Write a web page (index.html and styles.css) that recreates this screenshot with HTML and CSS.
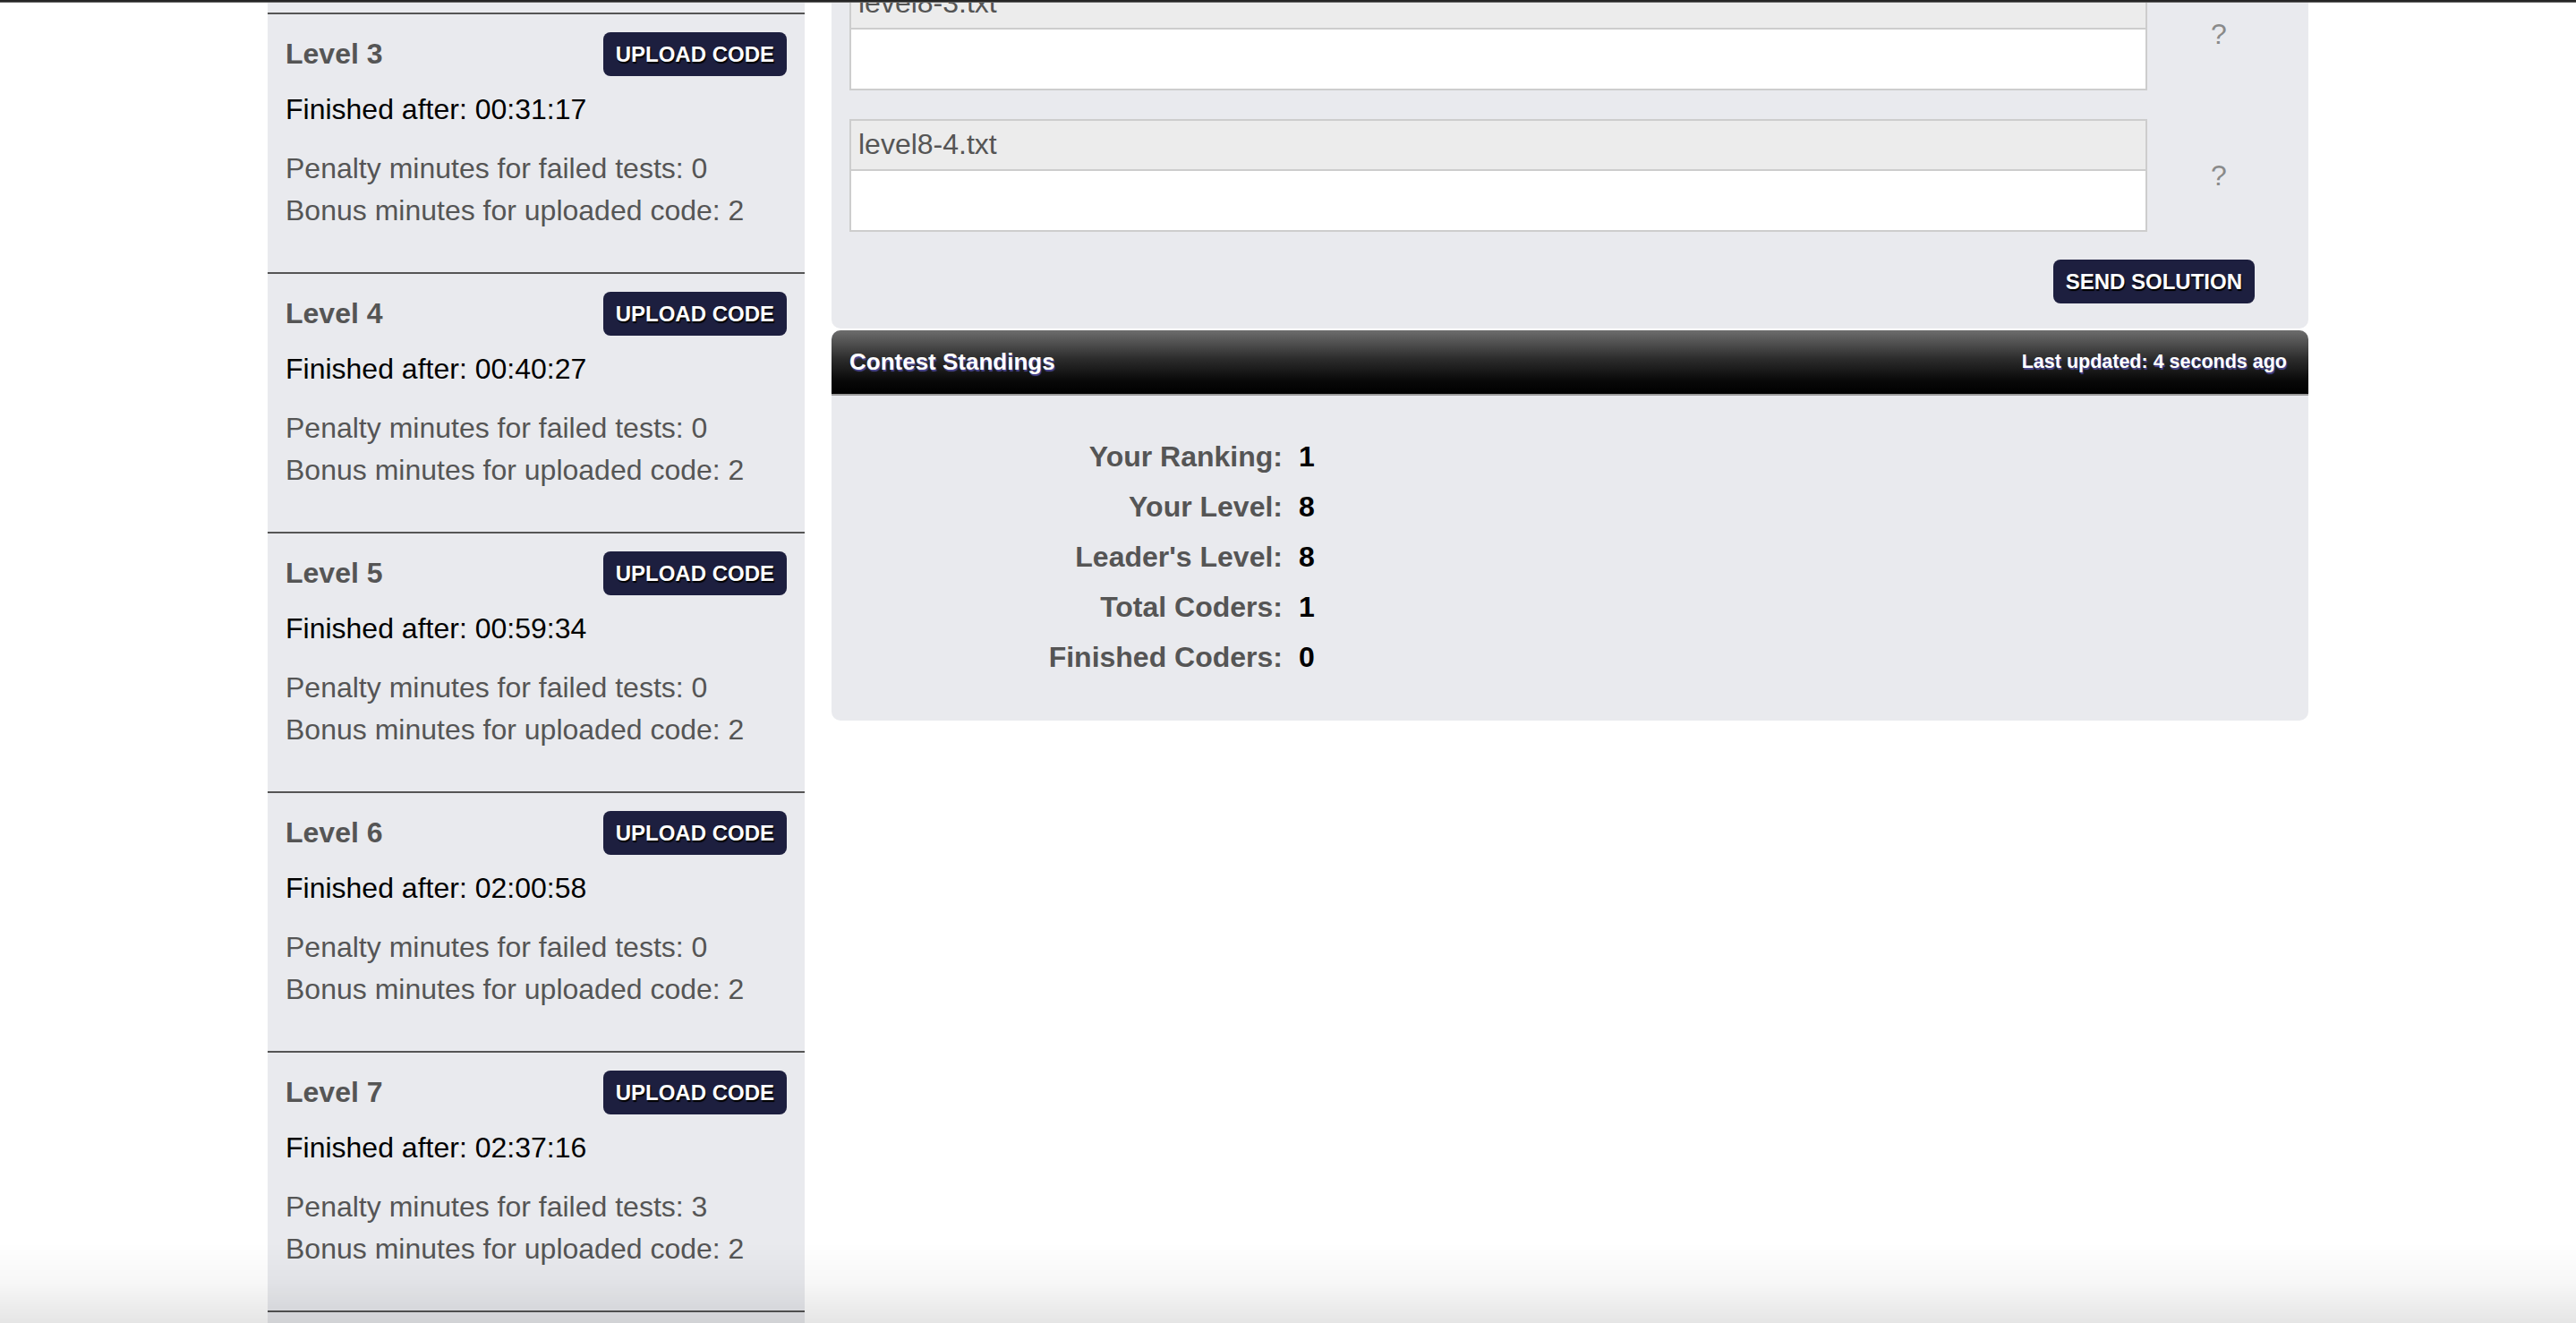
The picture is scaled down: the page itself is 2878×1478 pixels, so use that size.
FILE: index.html
```html
<!DOCTYPE html>
<html lang="en">
<head>
<meta charset="utf-8">
<title>Contest</title>
<link rel="stylesheet" href="styles.css">
</head>
<body>
<div class="topbar"></div>
<div class="page">
  <aside class="levels">
    <section class="level">
      <div class="level-head"><h3>Level 3</h3><button class="btn" type="button">UPLOAD CODE</button></div>
      <p class="finished">Finished after: 00:31:17</p>
      <p class="stat">Penalty minutes for failed tests: 0</p>
      <p class="stat">Bonus minutes for uploaded code: 2</p>
    </section>
    <section class="level">
      <div class="level-head"><h3>Level 4</h3><button class="btn" type="button">UPLOAD CODE</button></div>
      <p class="finished">Finished after: 00:40:27</p>
      <p class="stat">Penalty minutes for failed tests: 0</p>
      <p class="stat">Bonus minutes for uploaded code: 2</p>
    </section>
    <section class="level">
      <div class="level-head"><h3>Level 5</h3><button class="btn" type="button">UPLOAD CODE</button></div>
      <p class="finished">Finished after: 00:59:34</p>
      <p class="stat">Penalty minutes for failed tests: 0</p>
      <p class="stat">Bonus minutes for uploaded code: 2</p>
    </section>
    <section class="level">
      <div class="level-head"><h3>Level 6</h3><button class="btn" type="button">UPLOAD CODE</button></div>
      <p class="finished">Finished after: 02:00:58</p>
      <p class="stat">Penalty minutes for failed tests: 0</p>
      <p class="stat">Bonus minutes for uploaded code: 2</p>
    </section>
    <section class="level">
      <div class="level-head"><h3>Level 7</h3><button class="btn" type="button">UPLOAD CODE</button></div>
      <p class="finished">Finished after: 02:37:16</p>
      <p class="stat">Penalty minutes for failed tests: 3</p>
      <p class="stat">Bonus minutes for uploaded code: 2</p>
    </section>
  </aside>

  <main class="content">
    <form class="solution">
      <div class="file-row first">
        <div class="file-box">
          <div class="file-name">level8-3.txt</div>
          <textarea class="file-input"></textarea>
        </div>
        <span class="help">?</span>
      </div>
      <div class="file-row">
        <div class="file-box">
          <div class="file-name">level8-4.txt</div>
          <textarea class="file-input"></textarea>
        </div>
        <span class="help">?</span>
      </div>
      <div class="actions"><button class="btn" type="button">SEND SOLUTION</button></div>
    </form>

    <section class="standings">
      <header class="standings-head">
        <h2>Contest Standings</h2>
        <span class="updated">Last updated: 4 seconds ago</span>
      </header>
      <dl class="standings-body">
        <dt>Your Ranking:</dt><dd>1</dd>
        <dt>Your Level:</dt><dd>8</dd>
        <dt>Leader's Level:</dt><dd>8</dd>
        <dt>Total Coders:</dt><dd>1</dd>
        <dt>Finished Coders:</dt><dd>0</dd>
      </dl>
    </section>
  </main>
</div>
<div class="vignette"></div>
</body>
</html>
```
FILE: styles.css
```css
* { box-sizing: border-box; }

html, body {
  margin: 0;
  padding: 0;
  background: #ffffff;
  font-family: "Liberation Sans", Arial, sans-serif;
  color: #000;
}

.topbar {
  position: fixed;
  top: 0;
  left: 0;
  right: 0;
  height: 3px;
  background: #262626;
  border-bottom: 1px solid #6a6a6a;
  z-index: 10;
}

.page {
  width: 2280px;
  margin: 0 auto;
  display: flex;
  align-items: flex-start;
  gap: 30px;
}

/* Left column: levels */
.levels {
  width: 600px;
  flex: none;
  background: #e9eaee;
  padding: 14px 0 40px;
}

.level {
  border-top: 2px solid #555;
  padding: 20px 20px 45px;
}

.level:last-child {
  border-bottom: 2px solid #555;
}

.level-head {
  display: flex;
  align-items: center;
  justify-content: space-between;
  height: 49px;
  margin-bottom: 14px;
}

.level-head h3 {
  margin: 0;
  font-size: 32px;
  font-weight: bold;
  color: #555;
}

.finished {
  margin: 0 0 20px;
  font-size: 32px;
  line-height: 46px;
  color: #000;
}

.stat {
  margin: 0;
  font-size: 32px;
  line-height: 47px;
  color: #555;
}

.btn {
  border: none;
  border-radius: 8px;
  background: #1d1f3f;
  color: #fff;
  font-family: "Liberation Sans", Arial, sans-serif;
  font-size: 24px;
  font-weight: bold;
  line-height: 29px;
  padding: 10px 14px;
  text-shadow: 1px 2px 1px #000;
  cursor: pointer;
}

/* Right column */
.content {
  width: 1650px;
  flex: none;
}

.solution {
  background: #e9eaee;
  padding: 0 20px 28px;
  border-radius: 0 0 10px 10px;
  overflow: hidden;
  margin: 0 0 2px;
}

.file-row {
  display: flex;
  align-items: center;
}

.file-row.first { margin-top: -25px; }
.file-row + .file-row { margin-top: 32px; }

.file-box {
  flex: 1;
  border: 2px solid #cdcdcd;
  display: flex;
  flex-direction: column;
}

.file-name {
  height: 56px;
  line-height: 52px;
  padding: 0 8px;
  background: #ececec;
  border-bottom: 2px solid #cdcdcd;
  font-size: 32px;
  color: #555;
}

.file-input {
  display: block;
  width: 100%;
  height: 66px;
  border: none;
  margin: 0;
  padding: 0;
  resize: none;
  background: #fff;
  outline: none;
}

.help {
  width: 160px;
  flex: none;
  text-align: center;
  font-size: 32px;
  color: #8a8a8a;
}

.actions {
  display: flex;
  justify-content: flex-end;
  margin-top: 31px;
  padding-right: 40px;
}

.standings {
  background: #e9eaee;
  border-radius: 10px;
}

.standings-head {
  height: 73px;
  display: flex;
  align-items: center;
  justify-content: space-between;
  padding: 0 24px 0 20px;
  border-radius: 10px 10px 0 0;
  border-bottom: 2px solid #9a9a9a;
  background: linear-gradient(to bottom, #6d6d6d 0%, #2c2c2c 45%, #080808 80%, #000 100%);
  color: #fff;
  text-shadow: 1px 2px 1px #4a4690;
}

.standings-head h2 {
  margin: 0;
  font-size: 26px;
  font-weight: bold;
}

.updated {
  font-size: 21.5px;
  font-weight: bold;
}

.standings-body {
  margin: 0;
  padding: 40px 0 43px;
  display: grid;
  grid-template-columns: 504px auto;
  column-gap: 18px;
  font-size: 32px;
  line-height: 56px;
  font-weight: bold;
}

.standings-body dt {
  text-align: right;
  color: #555;
}

.standings-body dd {
  margin: 0;
  color: #000;
}

.vignette {
  position: fixed;
  left: 0;
  right: 0;
  bottom: 0;
  height: 90px;
  pointer-events: none;
  background: linear-gradient(to bottom, rgba(0,0,0,0) 0%, rgba(0,0,0,0.03) 50%, rgba(0,0,0,0.1) 100%);
  z-index: 5;
}
```
